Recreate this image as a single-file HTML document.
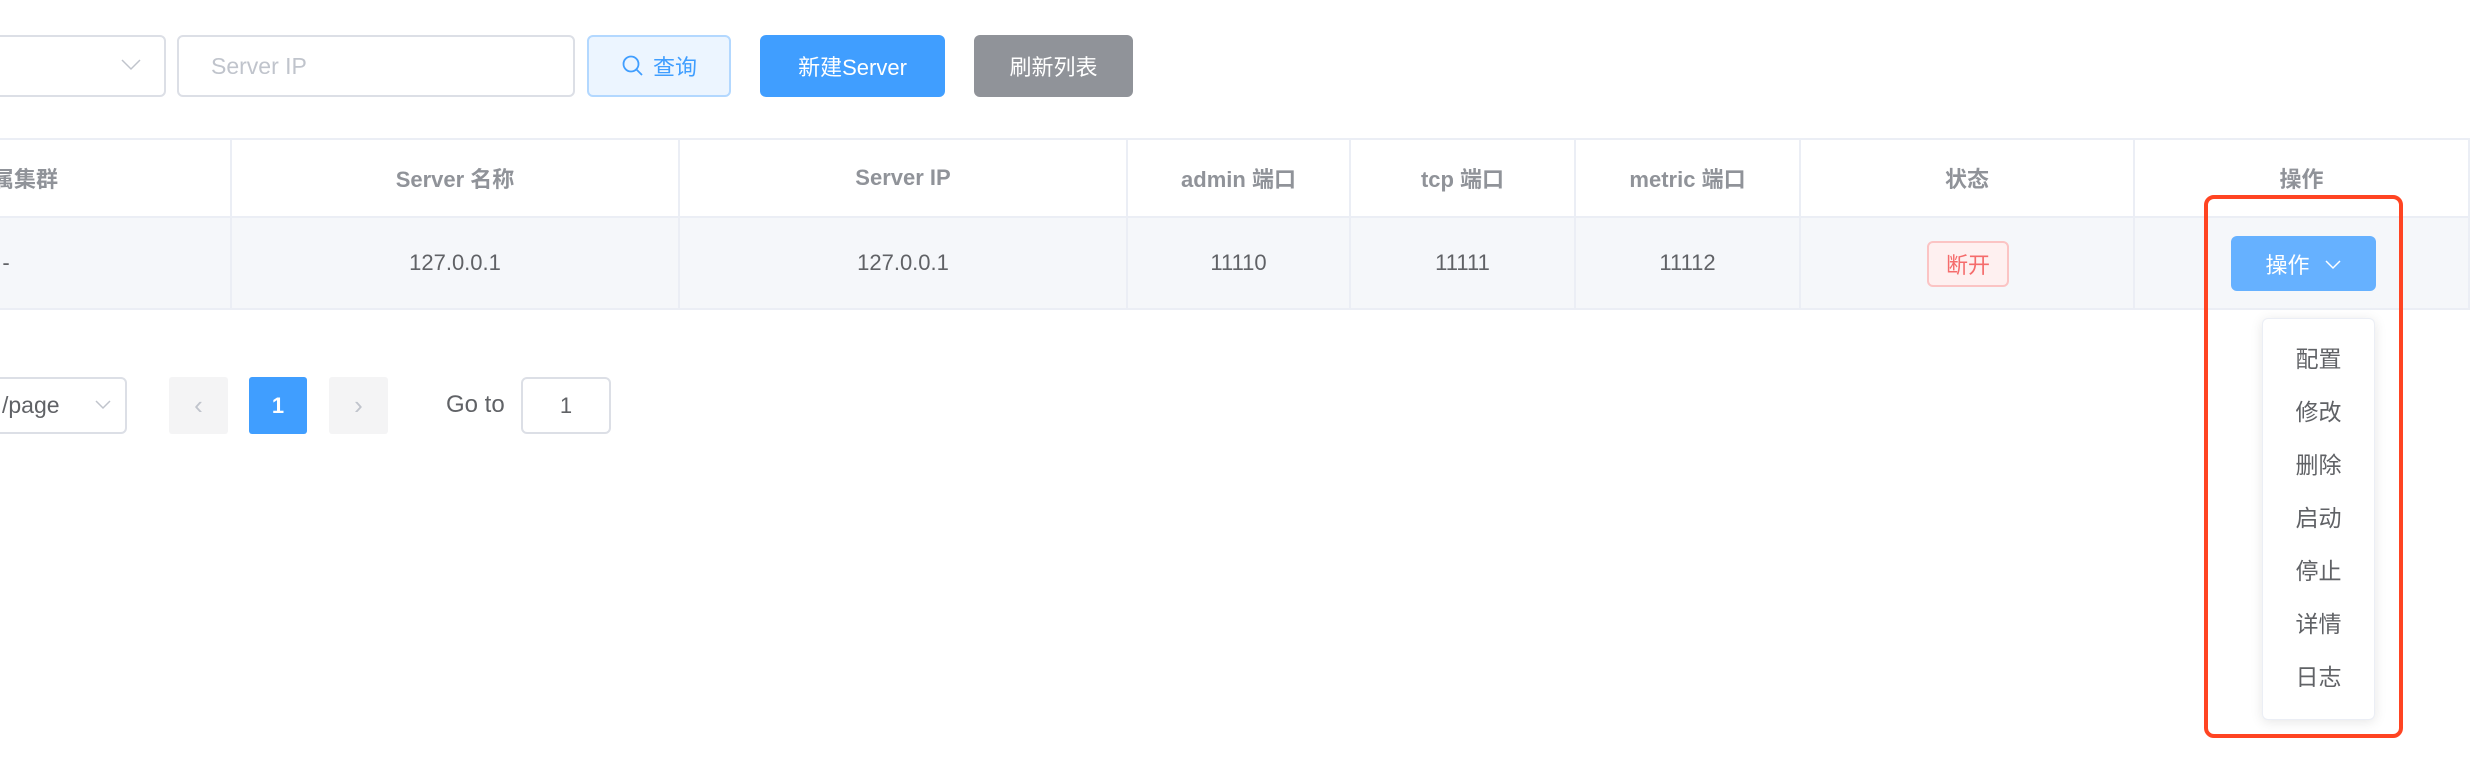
<!DOCTYPE html>
<html><head><meta charset="utf-8"><style>
*{box-sizing:border-box;margin:0;padding:0}
body{width:2482px;height:760px;background:#fff;position:relative;overflow:hidden;font-family:"Liberation Sans","Noto Sans CJK SC",sans-serif;color:#606266;font-size:22px}
.a{position:absolute}
.box{border:2px solid #dcdfe6;border-radius:6px;background:#fff}
.btn{display:flex;align-items:center;justify-content:center;border-radius:6px;font-size:22px}
.cell{position:absolute;display:flex;align-items:center;justify-content:center}
.vl{position:absolute;width:2px;background:#ebeef5}
.hl{position:absolute;height:2px;background:#ebeef5;left:0;width:2470px}
.th{font-weight:bold;color:#909399}
.dd div{height:53px;display:flex;align-items:center;justify-content:center;color:#606266;font-size:23px}
</style></head><body>
<div class="a box" style="left:-20px;top:35px;width:186px;height:62px"></div>
<svg class="a" style="left:120px;top:58px" width="22" height="14" viewBox="0 0 22 14"><path d="M2 2 L11 11 L20 2" fill="none" stroke="#c0c4cc" stroke-width="1.5"/></svg>
<div class="a box" style="left:177px;top:35px;width:398px;height:62px;display:flex;align-items:center;padding-left:32px;color:#c0c4cc;font-size:23px">Server IP</div>
<div class="a btn" style="left:587px;top:35px;width:144px;height:62px;background:#ecf5ff;border:2px solid #b3d8ff;color:#409eff">
<svg width="24" height="24" viewBox="0 0 24 24" style="margin-right:8px"><circle cx="10" cy="10" r="7.5" fill="none" stroke="#409eff" stroke-width="1.8"/><path d="M15.5 15.5 L21 21" stroke="#409eff" stroke-width="1.8"/></svg>查询</div>
<div class="a btn" style="left:760px;top:35px;width:185px;height:62px;background:#409eff;color:#fff">新建Server</div>
<div class="a btn" style="left:974px;top:35px;width:159px;height:62px;background:#909399;color:#fff">刷新列表</div>
<div class="a" style="left:0;top:217px;width:2470px;height:92px;background:#f5f7fa"></div>
<div class="hl" style="top:138px"></div>
<div class="hl" style="top:216px"></div>
<div class="hl" style="top:308px"></div>
<div class="vl" style="left:230px;top:138px;height:172px"></div>
<div class="vl" style="left:678px;top:138px;height:172px"></div>
<div class="vl" style="left:1126px;top:138px;height:172px"></div>
<div class="vl" style="left:1349px;top:138px;height:172px"></div>
<div class="vl" style="left:1574px;top:138px;height:172px"></div>
<div class="vl" style="left:1799px;top:138px;height:172px"></div>
<div class="vl" style="left:2133px;top:138px;height:172px"></div>
<div class="vl" style="left:2468px;top:138px;height:172px"></div>
<div class="cell th" style="left:-8px;top:140px;width:70px;height:76px;justify-content:flex-start">属集群</div>
<div class="cell th" style="left:231px;top:140px;width:448px;height:76px">Server 名称</div>
<div class="cell th" style="left:679px;top:140px;width:448px;height:76px">Server IP</div>
<div class="cell th" style="left:1127px;top:140px;width:223px;height:76px">admin 端口</div>
<div class="cell th" style="left:1350px;top:140px;width:225px;height:76px">tcp 端口</div>
<div class="cell th" style="left:1575px;top:140px;width:225px;height:76px">metric 端口</div>
<div class="cell th" style="left:1800px;top:140px;width:334px;height:76px">状态</div>
<div class="cell th" style="left:2134px;top:140px;width:335px;height:76px">操作</div>
<div class="cell" style="left:0;top:218px;width:12px;height:90px">-</div>
<div class="cell" style="left:231px;top:218px;width:448px;height:90px">127.0.0.1</div>
<div class="cell" style="left:679px;top:218px;width:448px;height:90px">127.0.0.1</div>
<div class="cell" style="left:1127px;top:218px;width:223px;height:90px">11110</div>
<div class="cell" style="left:1350px;top:218px;width:225px;height:90px">11111</div>
<div class="cell" style="left:1575px;top:218px;width:225px;height:90px">11112</div>
<div class="a btn" style="left:1927px;top:241px;width:82px;height:46px;background:#fef0f0;border:2px solid #fbc4c4;color:#f56c6c">断开</div>
<div class="a btn" style="left:2231px;top:236px;width:145px;height:55px;background:#66b1ff;color:#fff">操作<svg width="18" height="12" viewBox="0 0 18 12" style="margin-left:14px"><path d="M2 3 L9 10 L16 3" fill="none" stroke="#fff" stroke-width="1.5"/></svg></div>
<div class="a box" style="left:-40px;top:377px;width:167px;height:57px;display:flex;align-items:center;padding-left:40px;font-size:23px">/page</div>
<svg class="a" style="left:94px;top:399px" width="18" height="12" viewBox="0 0 18 12"><path d="M2 2 L9 9 L16 2" fill="none" stroke="#c0c4cc" stroke-width="1.5"/></svg>
<div class="a btn" style="left:169px;top:377px;width:59px;height:57px;background:#f4f4f5;border-radius:3px;color:#c0c4cc;font-size:26px">‹</div>
<div class="a btn" style="left:249px;top:377px;width:58px;height:57px;background:#409eff;border-radius:3px;color:#fff;font-weight:bold">1</div>
<div class="a btn" style="left:329px;top:377px;width:59px;height:57px;background:#f4f4f5;border-radius:3px;color:#c0c4cc;font-size:26px">›</div>
<div class="a" style="left:446px;top:391px;font-size:24px">Go to</div>
<div class="a box btn" style="left:521px;top:377px;width:90px;height:57px">1</div>
<div class="a dd" style="left:2262px;top:318px;width:113px;height:402px;background:#fff;border:1px solid #ebeef5;border-radius:6px;box-shadow:0 2px 12px rgba(0,0,0,.1);padding-top:11px">
<div>配置</div><div>修改</div><div>删除</div><div>启动</div><div>停止</div><div>详情</div><div>日志</div></div>
<div class="a" style="left:2204px;top:195px;width:199px;height:543px;border:4px solid #ff4422;border-radius:10px"></div>
</body></html>
